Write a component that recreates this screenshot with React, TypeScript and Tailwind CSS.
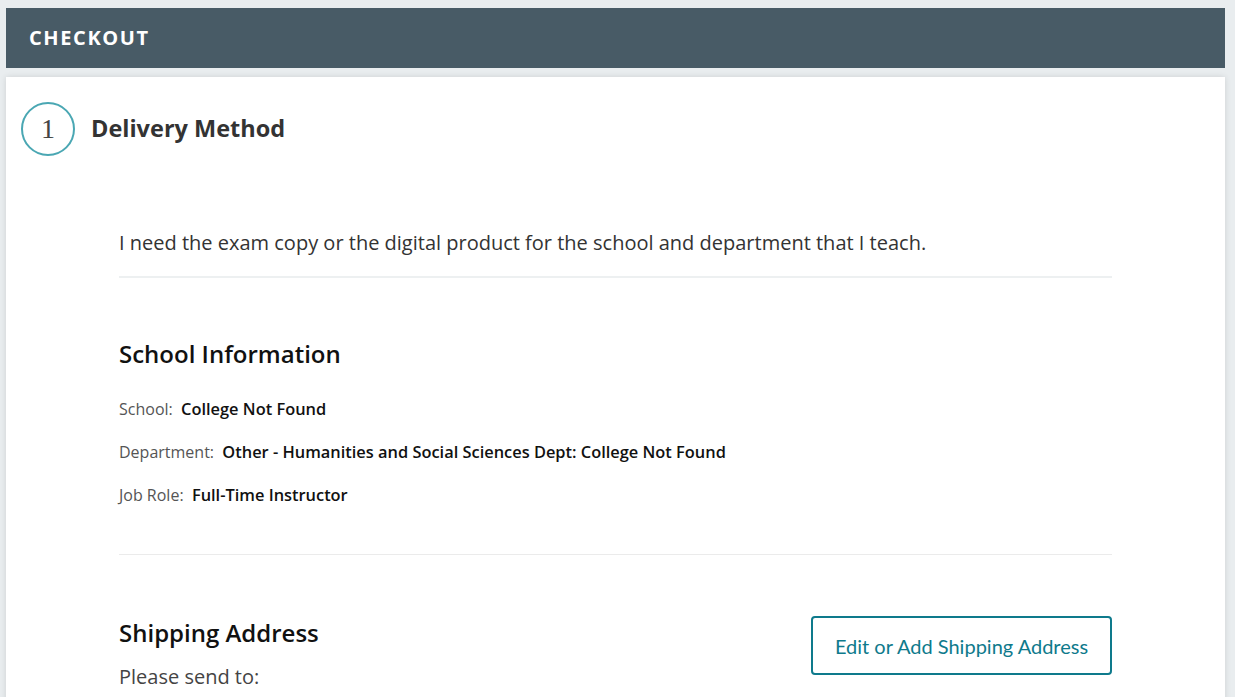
import React from 'react';

const font = { fontFamily: '"Source Sans Pro", "Open Sans", "Noto Sans", sans-serif' };

function InfoRow({ label, value }: { label: string; value: string }) {
  return (
    <p className="text-[16px] leading-[22px] text-[#555]">
      {label}:&nbsp; <span className="text-[16.4px] font-semibold text-[#111]">{value}</span>
    </p>
  );
}

export default function App() {
  return (
    <div
      className="min-h-[697px] w-[1235px] bg-[#e9edef] pt-2 pl-[6px] pr-[10px] overflow-hidden"
      style={font}
    >
      <div className="h-[60px] bg-[#485b66] flex items-center px-[23px]">
        <h1 className="text-white text-[20px] font-bold tracking-[0.08em]">CHECKOUT</h1>
      </div>
      <div className="mt-[9px] bg-white shadow-[0_0_6px_rgba(0,0,0,0.12)] h-[640px]">
        <div className="flex items-center pl-[15px] pt-[25px]">
          <div className="w-[54px] h-[54px] rounded-full border-2 border-[#4aa7b3] flex items-center justify-center">
            <span className="text-[28px] text-[#444] leading-none" style={{ fontFamily: '"Liberation Serif", serif' }}>1</span>
          </div>
          <h2 className="ml-[16px] text-[23.5px] font-bold text-[#333]">Delivery Method</h2>
        </div>

        <div className="ml-[113px] w-[993px]">
          <p className="mt-[73px] text-[20px] leading-[28px] text-[#333]">
            I need the exam copy or the digital product for the school and department that I teach.
          </p>
          <div className="mt-[19px] border-t-2 border-[#edf0f1]" />

          <h3 className="mt-[60px] text-[24px] leading-[32px] font-semibold text-[#111]">School Information</h3>
          <div className="mt-[28px] flex flex-col gap-[21px]">
            <InfoRow label="School" value="College Not Found" />
            <InfoRow label="Department" value="Other - Humanities and Social Sciences Dept: College Not Found" />
            <InfoRow label="Job Role" value="Full-Time Instructor" />
          </div>
          <div className="mt-[48px] border-t border-[#ebebeb]" />

          <div className="mt-[61px] flex justify-between items-start">
            <div>
              <h3 className="mt-[1px] text-[24px] leading-[32px] font-semibold text-[#111]">Shipping Address</h3>
              <p className="mt-[14px] text-[20px] leading-[28px] text-[#444]">Please send to:</p>
            </div>
            <button
              className="w-[301px] h-[59px] rounded-[4px] border-2 border-[#0e7a8c] text-[#0e7a8c] text-[20px]"
              style={{ fontFamily: 'Lato, sans-serif' }}
            >
              Edit or Add Shipping Address
            </button>
          </div>
        </div>
      </div>
    </div>
  );
}
